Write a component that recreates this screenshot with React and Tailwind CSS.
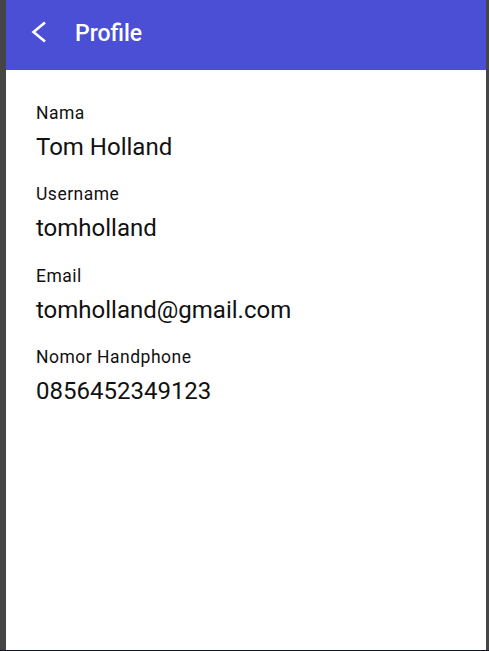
import React from 'react';

const fields = [
  { label: 'Nama', value: 'Tom Holland' },
  { label: 'Username', value: 'tomholland' },
  { label: 'Email', value: 'tomholland@gmail.com' },
  { label: 'Nomor Handphone', value: '0856452349123' },
];

const BackIcon = () => (
  <svg width="16" height="22" viewBox="0 0 16 22" fill="none">
    <polyline points="14,1.5 2.5,11 14,20.5" stroke="#ffffff" strokeWidth="2.6" strokeLinejoin="miter" />
  </svg>
);

export default function App() {
  return (
    <div className="flex flex-col h-[651px] w-full bg-[#454545]" style={{ fontFamily: 'Roboto, "Noto Sans", sans-serif' }}>
      <div className="flex flex-1 min-h-0">
        <div className="w-[6px] bg-[#454545]" />
        <div className="flex-1 flex flex-col bg-white">
          {/* App bar */}
          <div className="h-[70px] bg-[#4a4fd6] flex items-start">
            <button className="ml-[25px] mt-[21px] w-[16px] h-[22px] flex">
              <BackIcon />
            </button>
            <h1 className="ml-[28px] mt-[20px] text-[23px] leading-[28px] font-medium text-white">Profile</h1>
          </div>

          {/* Profile details */}
          <div className="flex flex-col pl-[30px] pt-[32.5px]">
            {fields.map((f) => (
              <div key={f.label} className="flex flex-col mb-[23.5px]">
                <span className="text-[17.5px] leading-[20px] tracking-[0.5px] text-[#111]">{f.label}</span>
                <span className="mt-[10px] text-[24px] leading-[28px] text-[#111]">{f.value}</span>
              </div>
            ))}
          </div>
        </div>
        <div className="w-[3px] bg-[#454545]" />
      </div>
      <div className="h-[1px] bg-[#0d1526]" />
    </div>
  );
}
